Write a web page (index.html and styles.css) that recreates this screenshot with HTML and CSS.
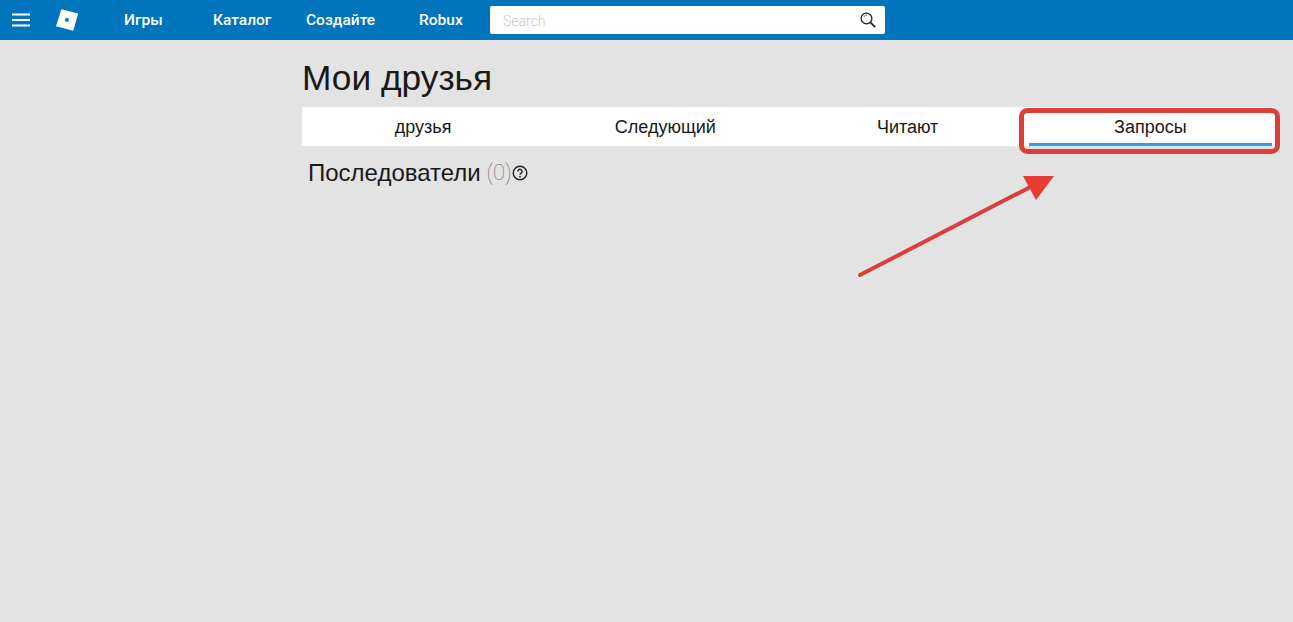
FILE: index.html
```html
<!DOCTYPE html>
<html lang="ru">
<head>
<meta charset="utf-8">
<title>Мои друзья</title>
<link rel="stylesheet" href="styles.css">
</head>
<body>
<header class="topbar">
  <svg class="menu-icon" width="18" height="14" viewBox="0 0 18 14"><path d="M0 1.5h18M0 7h18M0 12.5h18" stroke="#fff" stroke-width="2"/></svg>
  <svg class="logo" width="24" height="24" viewBox="0 0 24 24"><path fill="#fff" fill-rule="evenodd" d="M6.4 1.2 23.2 5.6 18.2 22.8 1 18.2ZM10.7 9.8 9.8 13.1 13.1 14 14 10.7Z"/></svg>
  <nav class="nav">
    <a class="nav-item nav-games">Игры</a>
    <a class="nav-item nav-catalog">Каталог</a>
    <a class="nav-item nav-create">Создайте</a>
    <a class="nav-item nav-robux">Robux</a>
  </nav>
  <div class="search">
    <span class="search-text">Search</span>
    <svg width="18" height="18" viewBox="0 0 18 18"><circle cx="7.5" cy="7.5" r="5.4" fill="none" stroke="#222" stroke-width="1.3"/><path d="M11.6 11.6 16.2 16.2" stroke="#222" stroke-width="1.8"/><path d="M5 6a3 3 0 0 1 3-2" fill="none" stroke="#777" stroke-width="1"/></svg>
  </div>
</header>
<main class="content">
  <h1 class="title">Мои друзья</h1>
  <div class="tabs">
    <div class="tab">друзья</div>
    <div class="tab">Следующий</div>
    <div class="tab">Читают</div>
    <div class="tab tab-active">Запросы</div>
  </div>
  <h2 class="subtitle">Последователи <span class="count">(0)</span>
    <svg class="help" width="16" height="16" viewBox="0 0 16 16"><circle cx="8" cy="8" r="6.8" fill="none" stroke="#222" stroke-width="1.4"/><path d="M5.9 6.4a2.1 2.1 0 1 1 3.3 1.7c-.8.5-1.2.9-1.2 1.7" fill="none" stroke="#222" stroke-width="1.4"/><circle cx="8" cy="11.7" r=".9" fill="#222"/></svg>
  </h2>
</main>
<svg class="annotation" width="1293" height="622" viewBox="0 0 1293 622">
  <rect x="1021.5" y="110.5" width="256" height="41" rx="6" fill="none" stroke="#dc3f38" stroke-width="5"/>
  <path d="M860 275 1040 182" stroke="#dc3f38" stroke-width="4" stroke-linecap="round" fill="none"/>
  <path d="M1023 176 1054 176 1036 200Z" fill="#e63c33"/>
</svg>
</body>
</html>
```
FILE: styles.css
```css
* { box-sizing: border-box; }
html, body { margin: 0; height: 100%; }
body {
  position: relative;
  min-height: 622px;
  overflow: hidden;
  background: #e3e3e3;
  color: #191919;
  font-family: "Liberation Sans", Arial, sans-serif;
}
.topbar {
  display: flex;
  align-items: center;
  height: 40px;
  padding-left: 12px;
  background: #0074bd;
}
.menu-icon { flex: none; }
.logo { flex: none; margin-left: 25px; }
.nav {
  display: flex;
  align-items: center;
  margin-left: 45px;
  color: #fff;
  font-family: Roboto, sans-serif;
  font-size: 15.5px;
  font-weight: 500;
}
.nav-games { width: 89px; }
.nav-catalog { width: 93px; }
.nav-create { width: 113px; }
.nav-robux { width: 71px; }
.search {
  display: flex;
  align-items: center;
  justify-content: space-between;
  width: 395px;
  height: 28px;
  padding: 0 8px 0 13px;
  border-radius: 2px;
  background: #fff;
}
.search-text {
  color: #c8c8c8;
  font-family: Roboto, sans-serif;
  font-size: 14px;
  font-weight: 300;
  padding-top: 1px;
}
.content {
  width: 973px;
  margin-left: 302px;
}
.title {
  margin: 0;
  padding-top: 17px;
  height: 67px;
  font-size: 35.3px;
  font-weight: 400;
  line-height: 42px;
}
.tabs {
  display: grid;
  grid-template-columns: repeat(4, 1fr);
  height: 39px;
  padding-right: 4px;
  background: #fff;
}
.tab {
  display: flex;
  align-items: center;
  justify-content: center;
  padding-top: 2px;
  font-size: 18px;
  color: #191919;
}
.tab-active {
  margin-right: -1px;
  padding-top: 5px;
  border-bottom: 3px solid #1ca5ec;
}
.subtitle {
  display: flex;
  align-items: center;
  margin: 14px 0 0 6px;
  font-size: 24px;
  font-weight: 400;
  line-height: 26px;
  white-space: pre;
}
.count {
  margin-left: -1px;
  color: #6f6f6f;
  font-family: Roboto, sans-serif;
  font-size: 22px;
  font-weight: 100;
}
.help { margin-left: 0; }
.annotation {
  position: absolute;
  top: 0;
  left: 0;
  pointer-events: none;
}
```
